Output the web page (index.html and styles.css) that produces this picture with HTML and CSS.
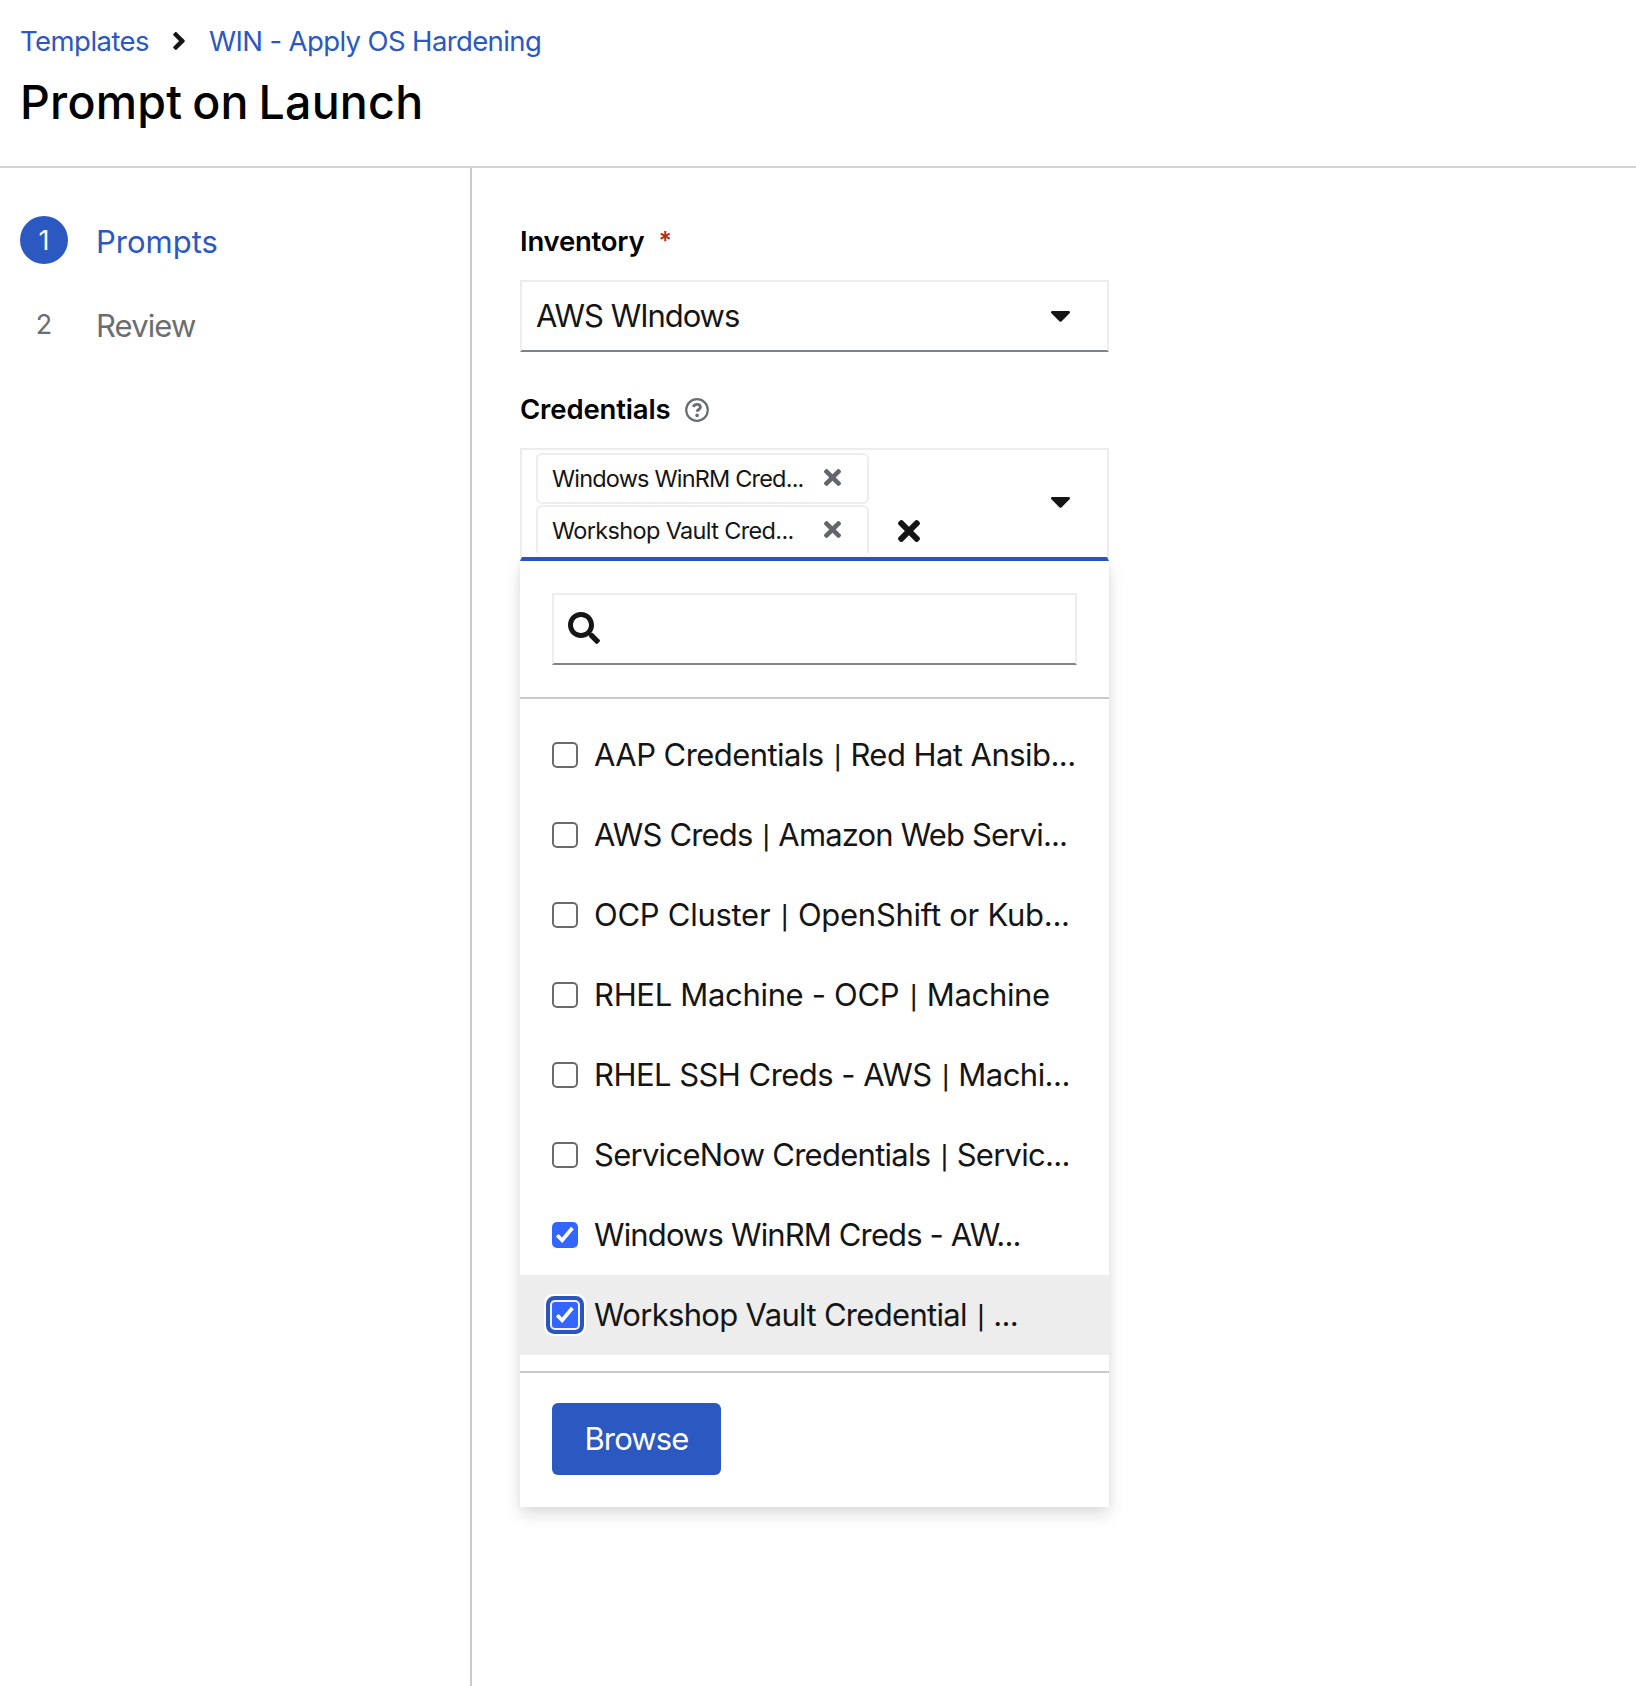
FILE: index.html
```html
<!DOCTYPE html>
<html lang="en">
<head>
<meta charset="utf-8">
<title>Prompt on Launch</title>
<link rel="stylesheet" href="styles.css">
</head>
<body>
<svg class="defs" aria-hidden="true">
  <symbol id="times" viewBox="0 80 352 352"><path d="M242.72 256l100.07-100.07c12.28-12.28 12.28-32.19 0-44.48l-22.24-22.24c-12.28-12.28-32.19-12.28-44.48 0L176 189.28 75.93 89.21c-12.28-12.28-32.19-12.28-44.48 0L9.21 111.45c-12.28 12.28-12.28 32.19 0 44.48L109.28 256 9.21 356.07c-12.28 12.28-12.28 32.19 0 44.48l22.24 22.24c12.28 12.28 32.2 12.28 44.48 0L176 322.72l100.07 100.07c12.28 12.28 32.2 12.28 44.48 0l22.24-22.24c12.28-12.28 12.28-32.19 0-44.48L242.72 256z"/></symbol>
  <symbol id="caret" viewBox="11 192 298 169"><path d="M31.3 192h257.3c17.8 0 26.7 21.5 14.1 34.1L174.1 354.7c-7.8 7.8-20.5 7.8-28.3 0L17.2 226.1C4.6 213.5 13.5 192 31.3 192z"/></symbol>
  <symbol id="check" viewBox="0 0 26 26"><path d="M5.2 13.2L10.2 18.2L20.4 6" fill="none" stroke="#fff" stroke-width="3.7"/></symbol>
</svg>

<header class="header">
  <nav class="breadcrumb">
    <a class="crumb crumb-first">Templates</a>
    <svg class="chevron" viewBox="24.7 96 206.7 320"><path d="M224.3 273l-136 136c-9.4 9.4-24.6 9.4-33.9 0l-22.6-22.6c-9.4-9.4-9.4-24.6 0-33.9l96.4-96.4-96.4-96.4c-9.4-9.4-9.4-24.6 0-33.9L54.3 103c9.4-9.4 24.6-9.4 33.9 0l136 136c9.5 9.4 9.5 24.6.1 34z"/></svg>
    <a class="crumb crumb-template">WIN - Apply OS Hardening</a>
  </nav>
  <h1 class="title">Prompt on Launch</h1>
</header>

<div class="wizard">
  <ol class="steps">
    <li class="step current"><span class="num">1</span><span class="step-name">Prompts</span></li>
    <li class="step"><span class="num">2</span><span class="step-name step-review">Review</span></li>
  </ol>

  <main class="form">
    <div class="label"><span class="label-inventory">Inventory</span><span class="required">*</span></div>
    <div class="select">
      <span class="value">AWS WIndows</span>
      <svg class="caret"><use href="#caret"/></svg>
    </div>

    <div class="label label-second"><span class="label-credentials">Credentials</span>
      <svg class="help" viewBox="0 0 24 24"><circle cx="12" cy="12" r="10.8" fill="none" stroke="#6a6e73" stroke-width="2.2"/><path d="M8.2 8.9C9 7.1 10.3 6.4 12 6.4c2 0 3.4 1.1 3.4 2.8 0 2.3-3.2 2.3-3.2 4.5" fill="none" stroke="#6a6e73" stroke-width="2.9"/><circle cx="12.1" cy="17.4" r="1.8"/></svg>
    </div>
    <div class="multi">
      <div class="chips">
        <div class="chip"><span class="chip-winrm">Windows WinRM Cred...</span><svg class="chip-x"><use href="#times"/></svg></div>
        <div class="chip"><span class="chip-vault">Workshop Vault Cred...</span><svg class="chip-x"><use href="#times"/></svg></div>
      </div>
      <svg class="clear"><use href="#times"/></svg>
      <svg class="caret"><use href="#caret"/></svg>
    </div>

    <div class="menu">
      <div class="menu-search">
        <div class="search">
          <svg class="magnifier" viewBox="0 0 512 512"><path d="M505 442.7L405.3 343c-4.5-4.5-10.6-7-17-7H372c27.6-35.3 44-79.7 44-128C416 93.1 322.9 0 208 0S0 93.1 0 208s93.1 208 208 208c48.3 0 92.7-16.4 128-44v16.3c0 6.4 2.5 12.5 7 17l99.7 99.7c9.4 9.4 24.6 9.4 33.9 0l28.3-28.3c9.4-9.4 9.4-24.6.1-34zM208 336c-70.7 0-128-57.2-128-128 0-70.7 57.2-128 128-128 70.7 0 128 57.2 128 128 0 70.7-57.2 128-128 128z"/></svg>
        </div>
      </div>
      <div class="options">
        <div class="option"><span class="box"></span><span class="text text-aap">AAP Credentials <i class="bar">|</i> Red Hat Ansib...</span></div>
        <div class="option"><span class="box"></span><span class="text text-aws">AWS Creds <i class="bar">|</i> Amazon Web Servi...</span></div>
        <div class="option"><span class="box"></span><span class="text text-ocp">OCP Cluster <i class="bar">|</i> OpenShift or Kub...</span></div>
        <div class="option"><span class="box"></span><span class="text text-rhel">RHEL Machine - OCP <i class="bar">|</i> Machine</span></div>
        <div class="option"><span class="box"></span><span class="text text-ssh">RHEL SSH Creds - AWS <i class="bar">|</i> Machi...</span></div>
        <div class="option"><span class="box"></span><span class="text text-snow">ServiceNow Credentials <i class="bar">|</i> Servic...</span></div>
        <div class="option"><span class="box checked"><svg><use href="#check"/></svg></span><span class="text text-winrm">Windows WinRM Creds - AW...</span></div>
        <div class="option active"><span class="box checked focused"><svg><use href="#check"/></svg></span><span class="text text-vault">Workshop Vault Credential <i class="bar">|</i> ...</span></div>
      </div>
      <div class="menu-footer"><button class="browse">Browse</button></div>
    </div>
  </main>
</div>
</body>
</html>
```
FILE: styles.css
```css
* { box-sizing: border-box; }
body {
  margin: 0;
  min-height: 1686px;
  display: flex;
  flex-direction: column;
  background: #fff;
  color: #151515;
  font-family: Inter, "Liberation Sans", sans-serif;
  font-size: 31px;
  white-space: nowrap;
}
svg { display: block; flex: none; fill: currentColor; }
.defs { position: absolute; width: 0; height: 0; }

/* Header */
.header { height: 168px; padding: 20px 20px 0; border-bottom: 2px solid #d2d2d2; }
.breadcrumb { display: flex; align-items: center; height: 42px; font-size: 27.5px; }
.crumb { color: #2b58c1; }
.crumb-first { width: 129px; letter-spacing: -0.54px; }
.crumb-template { letter-spacing: -0.62px; }
.chevron { width: 12px; height: 18px; margin: 0 24px; }
.title { margin: 12px 0 0; font-size: 46.5px; line-height: 57px; font-weight: 500; letter-spacing: 0.25px; word-spacing: -2.9px; color: #000; }

/* Wizard */
.wizard { flex: 1; display: flex; }
.steps { width: 472px; margin: 0; padding: 48px 20px; border-right: 2px solid #c9c9c9; list-style: none; display: flex; flex-direction: column; gap: 36px; color: #6a6e73; }
.step { display: flex; gap: 28px; height: 48px; line-height: 48px; }
.num { width: 48px; padding-top: 1px; border-radius: 50%; text-align: center; font-size: 27px; }
.step-name { padding-top: 2px; }
.step-review { letter-spacing: -0.9px; }
.current { color: #2b58c1; }
.current .num { background: #2b58c1; color: #fff; }

.form { width: 637px; padding: 52px 0 0 48px; }
.label { display: flex; align-items: center; height: 42px; margin-bottom: 18px; font-size: 27.5px; font-weight: 600; line-height: 42px; color: #000; }
.label-second { margin-top: 36px; }
.label-inventory { letter-spacing: -0.22px; }
.label-credentials { letter-spacing: -0.15px; }
.required { margin: 0 0 0 14px; font-size: 25px; color: #b1311b; }
.help { width: 24px; height: 24px; margin: 2px 0 0 15px; color: #6a6e73; }

.select { display: flex; align-items: center; justify-content: space-between; height: 72px; padding: 0 37px 0 14px; border: 2px solid #ededed; border-bottom-color: #7f8287; }
.value { padding-bottom: 2px; letter-spacing: -1.04px; }
.caret { width: 19px; height: 11px; }

.multi { display: flex; height: 113px; padding: 3px 37px 0 14px; border: 2px solid #ededed; border-bottom: 4px solid #2b58c1; }
.multi .caret { margin: 44px 0 0 auto; }
.chips { display: flex; flex-direction: column; gap: 1px; height: 100px; overflow: hidden; }
.chip { flex: none; display: flex; align-items: center; justify-content: space-between; width: 333px; height: 51px; padding: 0 26px 0 14px; border: 2px solid #ededed; border-radius: 6px; font-size: 23.5px; }
.chip-winrm { letter-spacing: -0.82px; }
.chip-vault { letter-spacing: -0.65px; }
.chip-x { width: 17px; height: 17px; margin-bottom: 2px; color: #63666b; }
.clear { width: 22px; height: 22px; margin: 67px 0 0 29px; }

/* Credential menu */
.menu { background: #fff; box-shadow: 0 8px 16px rgba(3, 3, 3, .12), 0 0 8px rgba(3, 3, 3, .06); }
.menu-search { padding: 32px; border-bottom: 2px solid #c9c9c9; }
.search { display: flex; align-items: center; height: 72px; padding-left: 14px; border: 2px solid #ededed; border-bottom-color: #808285; }
.magnifier { width: 32px; height: 32px; margin-top: -2px; }
.options { padding: 16px 0; }
.option { display: flex; align-items: center; gap: 16px; height: 80px; padding: 0 32px; }
.active { background: #ededed; }
.box { flex: none; width: 26px; height: 26px; border: 2px solid #6b6b6b; border-radius: 5px; }
.checked { border: 0; background: #3366ff; }
.checked svg { width: 26px; height: 26px; }
.focused { border-radius: 3px; box-shadow: 0 0 0 2px #f2f2f2, 0 0 0 6px #2a55c0, 0 0 0 8px #fff; }
.text { padding-bottom: 2px; }
.bar { font-size: 23px; font-weight: 500; font-style: normal; line-height: 0; margin: 0 1px 0 2px; }
.text-aap { letter-spacing: -0.55px; }
.text-aws { letter-spacing: -0.84px; }
.text-ocp { letter-spacing: -0.27px; }
.text-rhel { letter-spacing: -0.32px; }
.text-ssh { letter-spacing: -0.54px; }
.text-snow { letter-spacing: -0.73px; }
.text-winrm { letter-spacing: -0.86px; }
.text-vault { letter-spacing: -0.68px; }

.menu-footer { padding: 30px 32px 32px; border-top: 2px solid #c9c9c9; }
.browse { display: block; width: 169px; height: 72px; padding: 0 0 2px; border: 0; border-radius: 6px; background: #2b58c1; color: #fff; font: inherit; letter-spacing: -0.84px; }
```
